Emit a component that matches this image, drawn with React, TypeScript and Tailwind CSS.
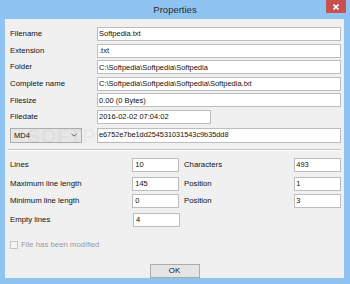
import React from "react";

function Field({ label, value, wide = true }: { label: string; value: string; wide?: boolean }) {
  return (
    <div className="h-[16.6px] flex items-start">
      <div className="w-[87px] h-[14px] flex items-center">{label}</div>
      <div
        className={
          (wide ? "flex-1 " : "w-[114px] ") +
          "h-[14px] bg-white border border-[#bdbdbd] flex items-center pl-[1px] text-[7.5px] text-[#111] whitespace-nowrap overflow-hidden"
        }
      >
        {value}
      </div>
    </div>
  );
}

function Stat({ label, value, label2, value2, mt }: { label: string; value: string; label2?: string; value2?: string; mt: string }) {
  return (
    <div className={"flex items-center h-[14px] " + mt}>
      <div className="w-[123px]">{label}</div>
      <div className="w-[47px] h-[14px] bg-white border border-[#bdbdbd] flex items-center pl-[2px] text-[7.5px]">{value}</div>
      {label2 !== undefined && (
        <>
          <div className="w-[116px] pl-[5px]">{label2}</div>
          <div className="w-[47px] h-[14px] bg-white border border-[#bdbdbd] flex items-center pl-[1px] text-[7.5px]">{value2}</div>
        </>
      )}
    </div>
  );
}

export default function App() {
  return (
    <div className="w-[350px] h-[284px] bg-[#8fc4f2] flex flex-col font-['Liberation_Sans',Arial,sans-serif] text-[7.8px] text-[#111] overflow-hidden">
      <div className="h-[19px] grid grid-cols-[1fr_auto_1fr] items-start">
        <div />
        <div className="text-[9.5px] text-[#2b2b2b] leading-[20px]">Properties</div>
        <div className="flex justify-end pr-[4px]">
          <div className="w-[20px] h-[13px] bg-[#c75050] flex items-center justify-center">
            <svg width="6" height="6" viewBox="0 0 6 6">
              <path d="M0.5 0.5 L5.5 5.5 M5.5 0.5 L0.5 5.5" stroke="white" strokeWidth="1.6" />
            </svg>
          </div>
        </div>
      </div>
      <div className="ml-[5px] mr-[6px] mb-[6px] flex-1 bg-[#f0f0f0] relative pl-[5px] pr-[3px] pt-[8px] flex flex-col">
        <Field label="Filename" value="Softpedia.txt" />
        <Field label="Extension" value=".txt" />
        <Field label="Folder" value="C:\Softpedia\Softpedia\Softpedia" />
        <Field label="Complete name" value="C:\Softpedia\Softpedia\Softpedia\Softpedia.txt" />
        <Field label="Filesize" value="0.00 (0 Bytes)" />
        <Field label="Filedate" value="2016-02-02 07:04:02" wide={false} />
        <div className="flex items-start mt-[1.4px] h-[15px]">
          <div className="w-[72px] h-[15px] bg-[#e6e6e6] border border-[#acacac] flex items-center justify-between pl-[3px] pr-[4px] text-[7.5px]">
            <span>MD4</span>
            <svg width="6" height="4" viewBox="0 0 6 4">
              <path d="M0.5 0.8 L3 3.2 L5.5 0.8" stroke="#555" strokeWidth="0.9" fill="none" />
            </svg>
          </div>
          <div className="ml-[15px] flex-1 h-[15px] bg-white border border-[#bdbdbd] flex items-center pl-[1px] text-[7.3px]">
            e6752e7be1dd254531031543c9b35dd8
          </div>
        </div>
        <div className="mt-[6px] -ml-[2px] border-t border-[#c4c4c4] border-b border-b-white" />
        <Stat label="Lines" value="10" label2="Characters" value2="493" mt="mt-[7px]" />
        <Stat label="Maximum line length" value="145" label2="Position" value2="1" mt="mt-[5px]" />
        <Stat label="Minimum line length" value="0" label2="Position" value2="3" mt="mt-[3px]" />
        <Stat label="Empty lines" value="4" mt="mt-[5px]" />
        <div className="mt-[12px] flex items-center gap-[3px] text-[#9a9a9a]">
          <div className="w-[8px] h-[8px] border border-[#c4c4c4] bg-[#f4f4f4]" />
          <span>File has been modified</span>
        </div>
        <div className="mt-[13px] flex justify-center pr-[2px]">
          <div className="w-[50px] h-[14px] bg-[#e5e5e5] border border-[#acacac] flex items-center justify-center text-[#111]">
            OK
          </div>
        </div>
        <div className="absolute left-[22px] top-[102px] text-[20px] font-bold tracking-[0.5px] text-black/[0.05] pointer-events-none select-none">
          SOFTPEDIA
        </div>
      </div>
    </div>
  );
}
